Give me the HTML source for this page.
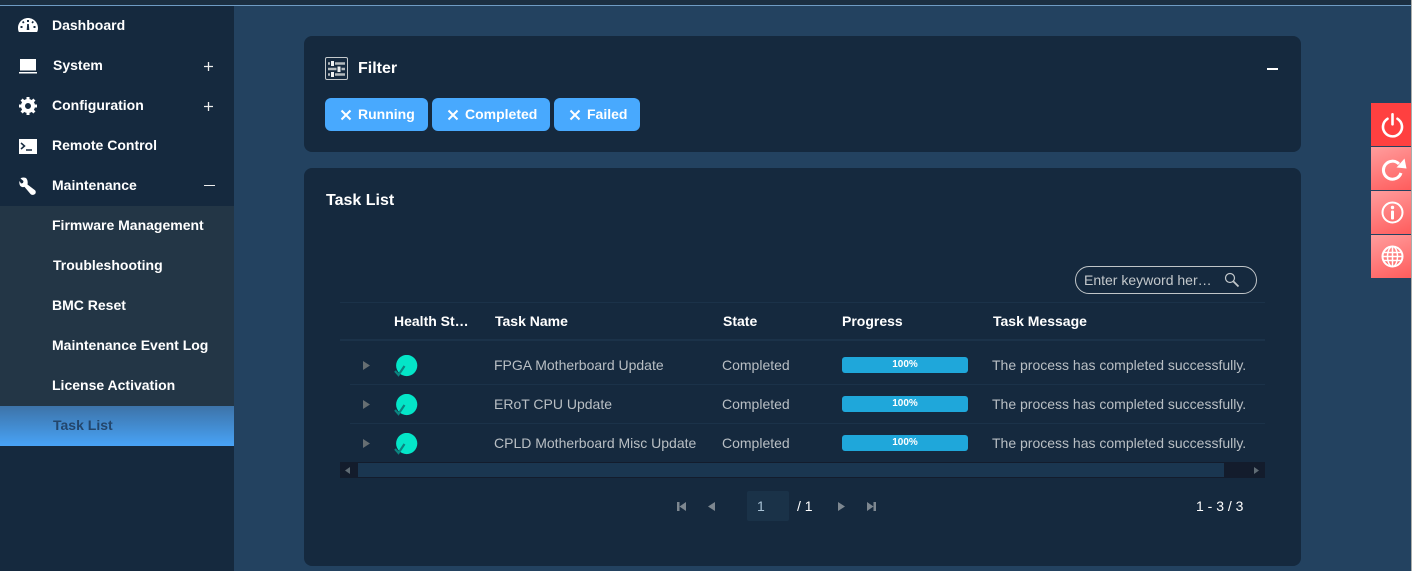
<!DOCTYPE html>
<html><head><meta charset="utf-8"><style>
html,body{margin:0;padding:0;width:1412px;height:571px;overflow:hidden;background:#234260;font-family:"Liberation Sans",sans-serif}
.a{position:absolute}
.t{position:absolute;white-space:nowrap;line-height:16px;font-size:14px}
.n{font-weight:bold;color:#fff;left:52px}
.h{font-weight:bold;color:#fff;top:313px}
.c{color:#b9bfc4;}
.chip{position:absolute;top:98px;height:33px;background:#48a9fe;border-radius:6px}
.chip span{position:absolute;top:8px;font-size:14px;line-height:16px;font-weight:bold;color:#fff;white-space:nowrap}
.chip svg{position:absolute;top:11px;left:15px}
.bar{position:absolute;left:842px;width:126px;height:16px;background:#1fa7da;border-radius:3px;color:#fff;font-size:10px;font-weight:bold;text-align:center;line-height:15px}
.side{position:absolute;left:1371px;width:41px;height:43px;background:linear-gradient(160deg,#ff9d9d,#ff5c5c)}
svg{display:block}
</style></head><body>
<div class="a" style="left:0;top:0;width:1412px;height:5px;background:#1b2f42"></div>
<div class="a" style="left:0;top:5px;width:1412px;height:1px;background:#6f9cc4"></div>
<div class="a" style="left:0;top:6px;width:234px;height:565px;background:#15293e"></div>
<div class="a" style="left:0;top:206px;width:234px;height:200px;background:#233646"></div>
<div class="a" style="left:0;top:406px;width:234px;height:40px;background:linear-gradient(#3d73a8,#48a3f7)"></div>

<svg class="a" style="left:18px;top:17px" width="20" height="16" viewBox="0 0 20 16"><path fill="#fff" fill-rule="evenodd" d="M10 1C4.500 1 0 5.500 0 11c0 1.500.3 2.800.9 4h18.200c.6-1.200.9-2.500.9-4C20 5.500 15.500 1 10 1zM9 3h2v2H9zM4 5l1.500-1 1 1.500L5 6.500zM14.500 4 16 5l-1.500 1.500-1-1zM2.500 9h2v2h-2zM15.500 9h2v2h-2zM9.200 7h1.600l.5 6H8.700z"/></svg>
<svg class="a" style="left:19px;top:59px" width="18" height="15" viewBox="0 0 18 15"><rect x="1" y="0" width="16" height="11.500" fill="#fff"/><rect x="0" y="13" width="18" height="1.500" fill="#fff"/></svg>
<svg class="a" style="left:19px;top:97px" width="18" height="18" viewBox="0 0 18 18"><circle cx="9" cy="9" r="5" fill="none" stroke="#fff" stroke-width="4"/><g stroke="#fff" stroke-width="3"><path d="M9 0v3M9 15v3M0 9h3M15 9h3M2.600 2.600l2 2M13.400 13.400l2 2M15.400 2.600l-2 2M4.600 13.400l-2 2"/></g></svg>
<div class="a" style="left:19px;top:139px;width:18px;height:15px;background:#fff"></div>
<svg class="a" style="left:19px;top:139px" width="18" height="15" viewBox="0 0 18 15"><path d="M2 4l3.500 3L2 10" fill="none" stroke="#15293e" stroke-width="1.500"/><path d="M7 11h6" stroke="#15293e" stroke-width="1.500"/></svg>
<svg class="a" style="left:19px;top:177px" width="17" height="18" viewBox="0 0 17 18"><path d="M7 1C4.500 0 2.500.5 1.500 1.500L4.500 4 4 6 2 6.500 .5 4C0 6 .5 8.500 2 9.500c1 .7 2.500.8 3.500.4L11.500 17c1 1.200 3.200 1.200 4.500 0 1-1 1-2.800 0-3.800L8.500 7.500C9 5 8.500 2.500 7 1z" fill="#fff"/></svg>

<div class="t n" style="top:17px">Dashboard</div>
<div class="t n" style="top:57px;left:53px">System</div>
<div class="t n" style="top:97px">Configuration</div>
<div class="t n" style="top:137px">Remote Control</div>
<div class="t n" style="top:177px">Maintenance</div>
<div class="t n" style="top:217px">Firmware Management</div>
<div class="t n" style="top:257px;left:53px">Troubleshooting</div>
<div class="t n" style="top:297px">BMC Reset</div>
<div class="t n" style="top:337px">Maintenance Event Log</div>
<div class="t n" style="top:377px">License Activation</div>
<div class="t n" style="top:417px;left:53px;color:#23466c">Task List</div>
<svg class="a" style="left:204px;top:62px" width="9" height="9"><path d="M0 4.500h9M4.500 0v9" stroke="#eee" stroke-width="1.300"/></svg>
<svg class="a" style="left:204px;top:102px" width="9" height="9"><path d="M0 4.500h9M4.500 0v9" stroke="#eee" stroke-width="1.300"/></svg>
<div class="a" style="left:204px;top:185px;width:11px;height:1px;background:#eee"></div>

<!-- Filter card -->
<div class="a" style="left:304px;top:36px;width:997px;height:116px;background:#15293e;border-radius:8px"></div>
<svg class="a" style="left:325px;top:57px" width="23" height="23" viewBox="0 0 23 23"><rect x=".5" y=".5" width="22" height="22" rx="1.500" fill="none" stroke="#c4c9cc"/><path d="M3 6.500h17M3 12h17M3 17.500h17" stroke="#b4babd" stroke-width="2.500"/><path d="M5 4h5v5H5zM11.500 9.500h5v5h-5zM5 15h5v5H5z" fill="#15293e"/><path d="M6 4h3v5H6zM12.500 9.500h3v5.500h-3zM6 15h3v5H6z" fill="#f0f2f3"/></svg>
<div class="t" style="left:358px;top:61px;font-size:16px;font-weight:bold;color:#fff">Filter</div>
<div class="a" style="left:1267px;top:68px;width:11px;height:2px;background:#fff"></div>
<div class="chip" style="left:325px;width:103px"><svg width="12" height="12"><path d="M1.500 1.500l9 9M10.500 1.500l-9 9" stroke="#fff" stroke-width="2"/></svg><span style="left:33px">Running</span></div>
<div class="chip" style="left:432px;width:118px"><svg width="12" height="12"><path d="M1.500 1.500l9 9M10.500 1.500l-9 9" stroke="#fff" stroke-width="2"/></svg><span style="left:33px">Completed</span></div>
<div class="chip" style="left:554px;width:86px"><svg width="12" height="12"><path d="M1.500 1.500l9 9M10.500 1.500l-9 9" stroke="#fff" stroke-width="2"/></svg><span style="left:33px">Failed</span></div>

<!-- Task card -->
<div class="a" style="left:304px;top:168px;width:997px;height:398px;background:#15293e;border-radius:8px"></div>
<div class="t" style="left:326px;top:193px;font-size:16px;font-weight:bold;color:#fff">Task List</div>
<div class="a" style="left:1075px;top:266px;width:180px;height:26px;border:1px solid #c0c5c8;border-radius:14px"></div>
<div class="t c" style="left:1084px;top:272px;color:#c3c8cb">Enter keyword her…</div>
<svg class="a" style="left:1224px;top:272px" width="16" height="16" viewBox="0 0 16 16"><circle cx="6" cy="6" r="4.500" fill="none" stroke="#c3c8cb" stroke-width="1.200"/><path d="M9.500 9.500l5 5" stroke="#c3c8cb" stroke-width="1.800"/></svg>

<div class="a" style="left:340px;top:302px;width:925px;height:1px;background:#1b3249"></div>
<div class="a" style="left:340px;top:339px;width:925px;height:2px;background:#1b3249"></div>
<div class="t h" style="left:394px">Health St…</div>
<div class="t h" style="left:495px">Task Name</div>
<div class="t h" style="left:723px">State</div>
<div class="t h" style="left:842px">Progress</div>
<div class="t h" style="left:993px">Task Message</div>

<div class="a" style="left:350px;top:384px;width:915px;height:1px;background:#1b3249"></div>
<div class="a" style="left:350px;top:423px;width:915px;height:1px;background:#1b3249"></div>

<svg class="a" style="left:363px;top:361px" width="7" height="9"><path d="M0 0l7 4.500L0 9z" fill="#666e72"/></svg>
<svg class="a" style="left:363px;top:400px" width="7" height="9"><path d="M0 0l7 4.500L0 9z" fill="#666e72"/></svg>
<svg class="a" style="left:363px;top:439px" width="7" height="9"><path d="M0 0l7 4.500L0 9z" fill="#666e72"/></svg>

<svg class="a" style="left:394px;top:355px" width="24" height="22" viewBox="0 0 24 22"><circle cx="12.700" cy="10.500" r="10.600" fill="#04e5c8"/><path d="M1 16l3.500 4L10.500 11" fill="none" stroke="#0b8480" stroke-width="2.200"/></svg>
<svg class="a" style="left:394px;top:394px" width="24" height="22" viewBox="0 0 24 22"><circle cx="12.700" cy="10.500" r="10.600" fill="#04e5c8"/><path d="M1 16l3.500 4L10.500 11" fill="none" stroke="#0b8480" stroke-width="2.200"/></svg>
<svg class="a" style="left:394px;top:433px" width="24" height="22" viewBox="0 0 24 22"><circle cx="12.700" cy="10.500" r="10.600" fill="#04e5c8"/><path d="M1 16l3.500 4L10.500 11" fill="none" stroke="#0b8480" stroke-width="2.200"/></svg>

<div class="t c" style="left:494px;top:357px">FPGA Motherboard Update</div>
<div class="t c" style="left:722px;top:357px">Completed</div>
<div class="bar" style="top:357px">100%</div>
<div class="t c" style="left:992px;top:357px">The process has completed successfully.</div>

<div class="t c" style="left:494px;top:396px">ERoT CPU Update</div>
<div class="t c" style="left:722px;top:396px">Completed</div>
<div class="bar" style="top:396px">100%</div>
<div class="t c" style="left:992px;top:396px">The process has completed successfully.</div>

<div class="t c" style="left:494px;top:435px">CPLD Motherboard Misc Update</div>
<div class="t c" style="left:722px;top:435px">Completed</div>
<div class="bar" style="top:435px">100%</div>
<div class="t c" style="left:992px;top:435px">The process has completed successfully.</div>

<!-- scrollbar -->
<div class="a" style="left:340px;top:462px;width:925px;height:16px;background:#131c2c"></div>
<div class="a" style="left:358px;top:463px;width:866px;height:14px;background:#1a3650"></div>
<svg class="a" style="left:345px;top:467px" width="5" height="7"><path d="M5 0L0 3.500 5 7z" fill="#5f6b74"/></svg>
<svg class="a" style="left:1254px;top:467px" width="5" height="7"><path d="M0 0l5 3.500L0 7z" fill="#5f6b74"/></svg>

<!-- pagination -->
<svg class="a" style="left:677px;top:502px" width="9" height="9"><path d="M0 0h2.500v9H0zM9 0v9L2.500 4.500z" fill="#7d8790"/></svg>
<svg class="a" style="left:708px;top:502px" width="7" height="9"><path d="M7 0v9L0 4.500z" fill="#7d8790"/></svg>
<div class="a" style="left:747px;top:491px;width:42px;height:30px;background:#1a3248;border-radius:2px"></div>
<div class="t" style="left:757px;top:498px;color:#a9c3d6">1</div>
<div class="t" style="left:797px;top:498px;color:#fff">/ 1</div>
<svg class="a" style="left:838px;top:502px" width="7" height="9"><path d="M0 0v9l7-4.500z" fill="#7d8790"/></svg>
<svg class="a" style="left:867px;top:502px" width="9" height="9"><path d="M0 0v9l6.500-4.500zM6.500 0H9v9H6.500z" fill="#7d8790"/></svg>
<div class="t" style="left:1196px;top:498px;color:#fff">1 - 3 / 3</div>

<!-- side buttons -->
<div class="side" style="top:103px;background:#ff4040"></div>
<div class="side" style="top:147px"></div>
<div class="side" style="top:191px"></div>
<div class="side" style="top:235px"></div>
<svg class="a" style="left:1381px;top:112px" width="24" height="26" viewBox="0 0 24 26"><path d="M6.500 6.800A9.500 9.500 0 1 0 16.500 6.800" fill="none" stroke="#fff" stroke-width="2.600" stroke-linecap="round"/><path d="M11.500 2.300v10" stroke="#fff" stroke-width="2.600" stroke-linecap="round"/></svg>
<svg class="a" style="left:1381px;top:157px" width="26" height="24" viewBox="0 0 26 24"><path d="M20 16A9 9 0 1 1 18 7" fill="none" stroke="#fff" stroke-width="3"/><path d="M15.500 10.500L25.500 11.500 23.500 1.500z" fill="#fff"/></svg>
<svg class="a" style="left:1381px;top:201px" width="24" height="24" viewBox="0 0 24 24"><circle cx="11.500" cy="11.500" r="10" fill="none" stroke="#fff" stroke-width="2"/><circle cx="11.500" cy="6.500" r="1.700" fill="#fff"/><rect x="10" y="9.500" width="3" height="9" rx="1" fill="#fff"/></svg>
<svg class="a" style="left:1381px;top:245px" width="24" height="24" viewBox="0 0 24 24"><g fill="none" stroke="#fff" stroke-width="1.500"><circle cx="11.500" cy="11.500" r="10" stroke-width="2"/><ellipse cx="11.500" cy="11.500" rx="5" ry="10"/><path d="M11.500 1.500v20M2 7.500h19M1.500 11.500h20M2 15.500h19"/></g></svg>
<div class="a" style="left:1411px;top:0;width:1px;height:571px;background:#a9adab"></div>
</body></html>
